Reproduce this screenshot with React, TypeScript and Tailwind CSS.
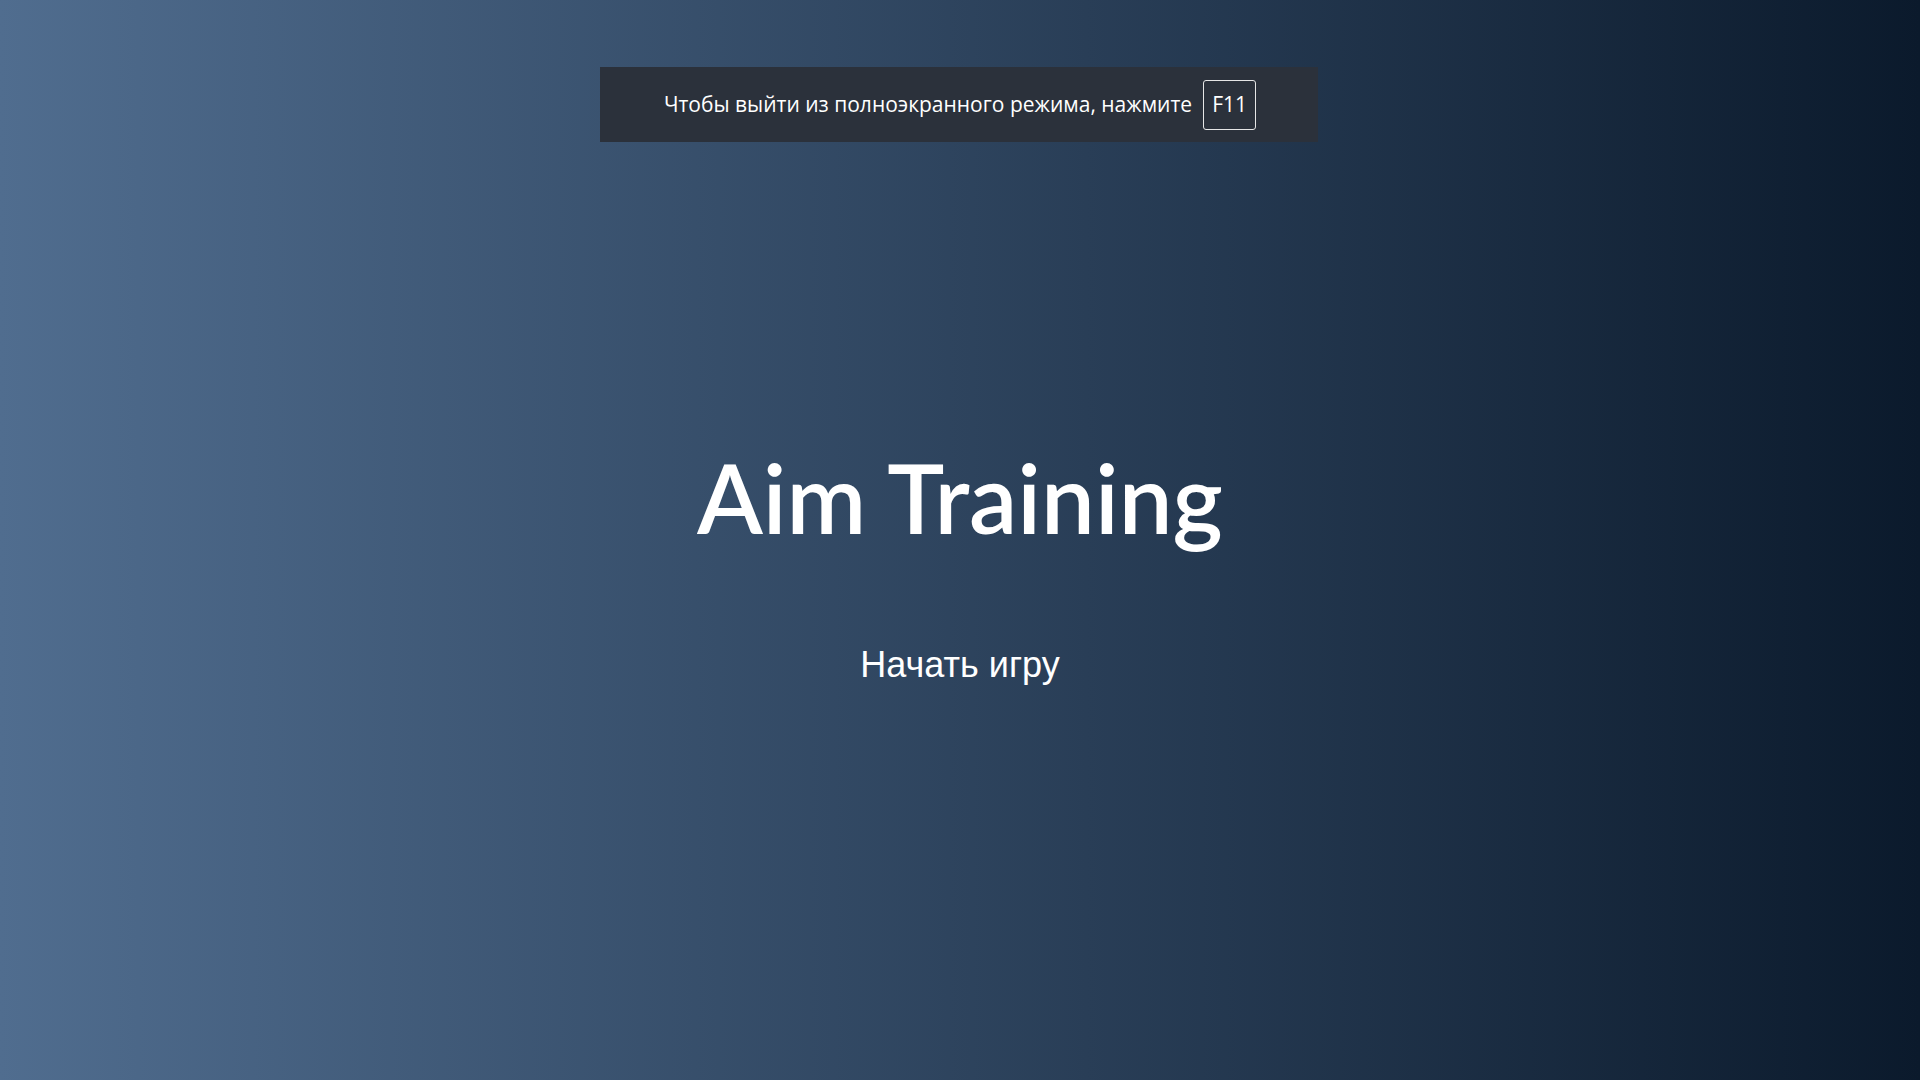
import React from "react";

export default function App() {
  return (
    <div className="relative w-full h-[1080px] overflow-hidden bg-[linear-gradient(to_right,#506d8f,#0b1a2c)] font-['Open_Sans',sans-serif] text-white">
      <div className="absolute left-[600px] top-[67px] w-[718px] h-[75px] bg-[#2b313b] flex items-center justify-center gap-[11px] pl-[2px]">
        <span className="text-[21px]">Чтобы выйти из полноэкранного режима, нажмите</span>
        <span className="w-[53px] h-[50px] border border-[#e6e6e6] rounded-[3px] flex items-center justify-center text-[21px]">F11</span>
      </div>
      <div className="flex flex-col items-center pt-[435px]">
        <h1 className="text-[96px] font-['Lato',sans-serif] font-semibold leading-[1.3]">Aim Training</h1>
        <button className="mt-[83px] text-[36px] font-['Liberation_Sans',sans-serif] leading-[1.2]">Начать игру</button>
      </div>
    </div>
  );
}
